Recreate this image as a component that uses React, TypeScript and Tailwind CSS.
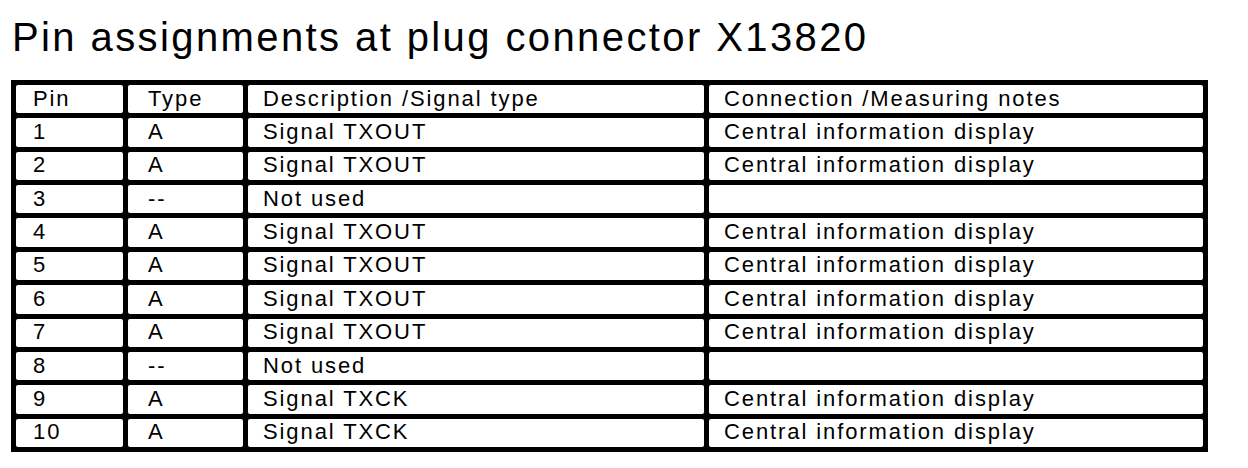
import React from "react";

const rows: [string, string, string, string][] = [
  ["1", "A", "Signal TXOUT", "Central information display"],
  ["2", "A", "Signal TXOUT", "Central information display"],
  ["3", "--", "Not used", ""],
  ["4", "A", "Signal TXOUT", "Central information display"],
  ["5", "A", "Signal TXOUT", "Central information display"],
  ["6", "A", "Signal TXOUT", "Central information display"],
  ["7", "A", "Signal TXOUT", "Central information display"],
  ["8", "--", "Not used", ""],
  ["9", "A", "Signal TXCK", "Central information display"],
  ["10", "A", "Signal TXCK", "Central information display"],
];

const header: [string, string, string, string] = [
  "Pin",
  "Type",
  "Description /Signal type",
  "Connection /Measuring notes",
];

const pad = ["pl-[17px]", "pl-[20px]", "pl-[15px]", "pl-[15px]"];

function Cell({ text, col }: { text: string; col: number }) {
  return (
    <div
      className={`bg-white rounded-[2px] flex items-center pb-[1px] whitespace-nowrap ${pad[col]}`}
    >
      {text}
    </div>
  );
}

export default function App() {
  return (
    <div
      className="w-[1248px] h-[468px] bg-white text-black pt-[17px] pl-[11px]"
      style={{ fontFamily: '"Liberation Sans", Arial, sans-serif' }}
    >
      <h1 className="text-[40px] leading-[40px] tracking-[2.4px] pl-[1px] font-normal">
        Pin assignments at plug connector X13820
      </h1>
      <div className="mt-[23px] w-[1197px] h-[372px] bg-black p-[5px] grid grid-cols-[107px_115px_456px_494px] grid-rows-[repeat(11,1fr)] gap-[5px] text-[22px] leading-none tracking-[1.9px]">
        {header.map((h, i) => (
          <Cell key={"h" + i} text={h} col={i} />
        ))}
        {rows.map((r, ri) =>
          r.map((c, ci) => <Cell key={ri + "-" + ci} text={c} col={ci} />)
        )}
      </div>
    </div>
  );
}
